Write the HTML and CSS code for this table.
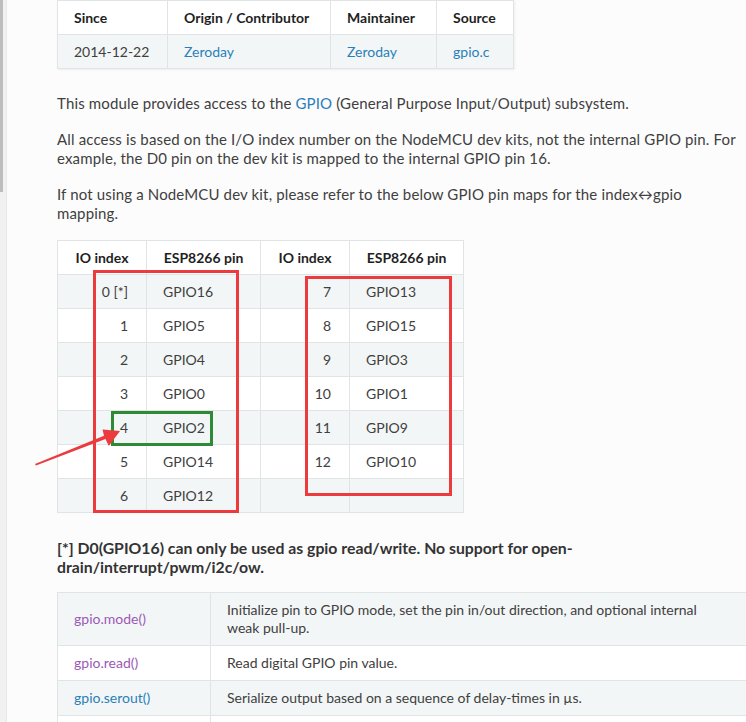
FILE: index.html
```html
<!DOCTYPE html>
<html lang="en">
<head>
  <meta charset="UTF-8" />
  <title>gpio - NodeMCU Documentation</title>
  <link rel="stylesheet" href="styles.css">
</head>
<body>
  <div class="rail"><div class="rail-thumb"></div></div>

  <div class="doc">
    <table class="meta">
      <tr><th class="c-since">Since</th><th class="c-origin">Origin / Contributor</th><th class="c-maint">Maintainer</th><th class="c-src">Source</th></tr>
      <tr><td>2014-12-22</td><td><a href="#">Zeroday</a></td><td><a href="#">Zeroday</a></td><td><a href="#">gpio.c</a></td></tr>
    </table>

    <p>This module provides access to the <a href="#">GPIO</a> (General Purpose Input/Output) subsystem.</p>
    <p>All access is based on the I/O index number on the NodeMCU dev kits, not the internal GPIO pin. For example, the D0 pin on the dev kit is mapped to the internal GPIO pin 16.</p>
    <p>If not using a NodeMCU dev kit, please refer to the below GPIO pin maps for the index&harr;gpio mapping.</p>

    <div class="pinmap">
      <table class="pins">
        <tr><th>IO index</th><th>ESP8266 pin</th><th>IO index</th><th>ESP8266 pin</th></tr>
        <tr><td class="idx">0 [*]</td><td>GPIO16</td><td class="idx">7</td><td>GPIO13</td></tr>
        <tr><td class="idx">1</td><td>GPIO5</td><td class="idx">8</td><td>GPIO15</td></tr>
        <tr><td class="idx">2</td><td>GPIO4</td><td class="idx">9</td><td>GPIO3</td></tr>
        <tr><td class="idx">3</td><td>GPIO0</td><td class="idx">10</td><td>GPIO1</td></tr>
        <tr><td class="idx">4</td><td>GPIO2</td><td class="idx">11</td><td>GPIO9</td></tr>
        <tr><td class="idx">5</td><td>GPIO14</td><td class="idx">12</td><td>GPIO10</td></tr>
        <tr><td class="idx">6</td><td>GPIO12</td><td class="idx"></td><td></td></tr>
      </table>
      <!-- screenshot annotations -->
      <svg class="marks" width="406" height="274" viewBox="0 0 406 274">
        <rect x="37.5" y="31.5" width="143" height="240" fill="none" stroke="#ec3b3f" stroke-width="3"/>
        <rect x="249.5" y="37.5" width="144" height="217" fill="none" stroke="#ec3b3f" stroke-width="3"/>
        <rect x="55.5" y="172.5" width="99" height="32" fill="none" stroke="#2f8a35" stroke-width="3"/>
        <polygon points="-22,224 -21,225.5 48.5,199 51.8,206 63,191 45.5,189.5 47,195.8" fill="#ec3b3f"/>
      </svg>
    </div>

    <p class="note">[*] D0(GPIO16) can only be used as gpio read/write. No support for open-drain/interrupt/pwm/i2c/ow.</p>

    <table class="funcs">
      <tr><td class="fn"><a class="seen" href="#">gpio.mode()</a></td><td>Initialize pin to GPIO mode, set the pin in/out direction, and optional internal weak pull-up.</td></tr>
      <tr><td class="fn"><a class="seen" href="#">gpio.read()</a></td><td>Read digital GPIO pin value.</td></tr>
      <tr><td class="fn"><a href="#">gpio.serout()</a></td><td>Serialize output based on a sequence of delay-times in µs.</td></tr>
      <tr><td class="fn">&nbsp;</td><td>&nbsp;</td></tr>
    </table>
  </div>
</body>
</html>
```

FILE: styles.css
```css
* { box-sizing: border-box; }
body {
  margin: 0;
  background: #fcfcfc;
  color: #404040;
  font-family: 'Lato', 'Open Sans', sans-serif;
  display: flex;
  overflow: hidden;
  height: 722px;
}
a { color: #2980b9; text-decoration: none; }
a.seen { color: #9b59b6; }

.rail {
  flex: 0 0 7px;
  background: #f1f1f1;
  border-right: 1px solid #e9e9e9;
}
.rail-thumb { width: 3px; height: 192px; background: #bdbdbd; }

.doc {
  flex: 0 0 760px;
  padding-left: 50px;
}
.doc p {
  width: 688px;
  margin: 0 0 17px;
  font-size: 15px;
  line-height: 19px;
  letter-spacing: 0.15px;
}

table { border-collapse: collapse; font-size: 14px; }
th, td {
  border: 1px solid #e1e4e5;
  padding: 0 16px;
  height: 34px;
}
th { color: #1f1f1f; font-weight: 700; }

.meta { margin: 0 0 25px; box-shadow: 1px 1px 2px rgba(0,0,0,0.06); }
.meta th { text-align: left; background: #fff; }
.meta tr:nth-child(2) td { background: #f3f6f6; height: 34px; }
.c-since { width: 110px; }
.c-origin { width: 163px; }
.c-maint { width: 106px; }
.c-src { width: 77px; }

.pinmap { position: relative; width: 406px; margin-bottom: 25px; }
.pins { width: 406px; table-layout: fixed; }
.pins th { text-align: center; background: #fff; }
.pins th:nth-child(odd) { width: 89px; }
.pins th:nth-child(even) { width: 114px; }
.pins td.idx { text-align: right; padding-right: 18px; }
.pins tr:nth-child(even) td { background: #f3f6f6; }
.pins tr:nth-child(odd) td { background: #fff; }
.marks { position: absolute; left: 0; top: 0; overflow: visible; }

.doc p.note {
  font-weight: 700;
  font-size: 15.8px;
  letter-spacing: 0;
  color: #333;
  width: 600px;
  line-height: 19px;
  margin-bottom: 16px;
}

.funcs { width: 700px; font-size: 14px; line-height: 18px; }
.funcs td { padding: 8px 30px 8px 16px; height: auto; }
.funcs td.fn { width: 153px; padding-right: 16px; }
.funcs tr:nth-child(odd) td { background: #f3f6f6; }
.funcs tr:nth-child(even) td { background: #fff; }
```
